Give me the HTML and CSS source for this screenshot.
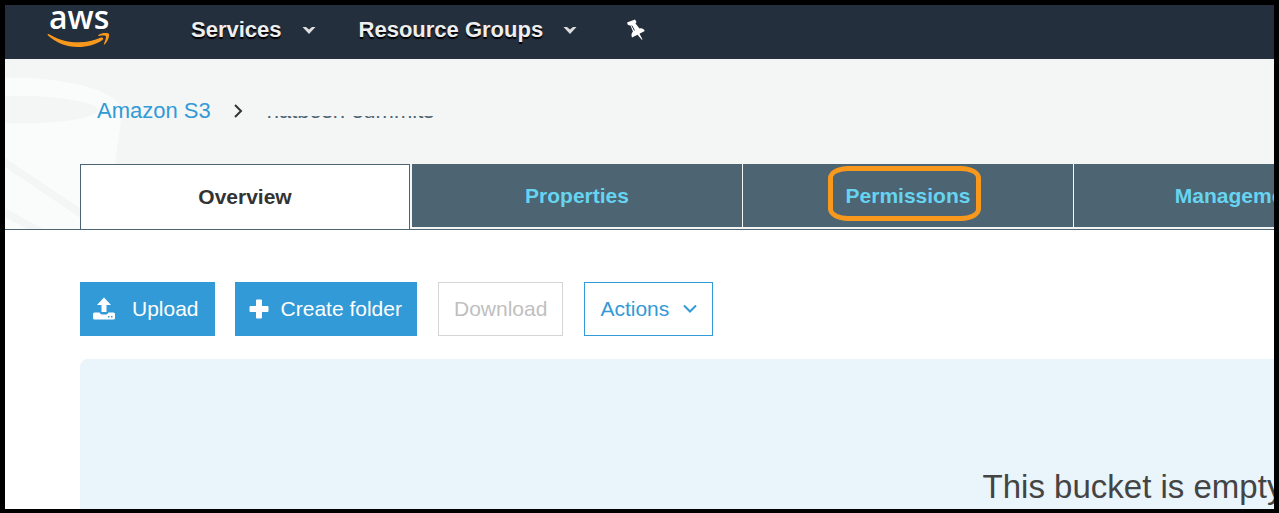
FILE: index.html
```html
<!DOCTYPE html>
<html lang="en">
<head>
<meta charset="utf-8">
<title>Amazon S3</title>
<link rel="stylesheet" href="styles.css">
</head>
<body>
<div class="frame">
  <nav class="topbar">
    <a class="logo" href="#" aria-label="aws">
      <svg viewBox="0 0 64 42" width="64" height="42">
        <text class="logo-text" x="2" y="24">aws</text>
        <path fill="#f8991d" d="M0.5 29.5C1 28.7 2 29 3 29.7C14 36 23 37.500 32 37.300C40 37.100 47 35.500 54 32.500C56 32 57 33.500 55.500 35C49 39.800 40 42 31 42C19 42 9 37.500 1 30.500ZM51.500 30C55 27.500 61 27.700 62 29C62.700 30.500 61 36.500 57.800 39.200C57 39.800 56.500 39.500 57 38.500C58.200 35.500 59.500 32 58.800 31.200C58 30.300 55 30.500 52 30.900C51 31 50.800 30.500 51.500 30Z"/>
      </svg>
    </a>
    <button class="menu services" type="button">Services
      <svg viewBox="0 0 14 9" width="14" height="9"><path fill="#ddd" d="M0.500 1L4 1L7 3.500L10 1L13.500 1L7 8Z"/></svg>
    </button>
    <button class="menu groups" type="button">Resource Groups
      <svg viewBox="0 0 14 9" width="14" height="9"><path fill="#ddd" d="M0.500 1L4 1L7 3.500L10 1L13.500 1L7 8Z"/></svg>
    </button>
    <button class="pin" type="button" aria-label="Pin">
      <svg viewBox="0 0 20 22" width="20" height="22"><path fill="#fff" d="M1 3.500L9 0.500L10.500 3L9.500 4.500L13.500 9.500C16 9 18 10 18.700 12L13.500 14.800L16.500 20.500L15.800 20.800L11.500 15.800L6 18.500C5 16 5.500 14.200 7 12.500L4.500 6.500L2 6Z"/><path d="M5.800 6.500L8.500 11.500" stroke="#242f3e" fill="none"/></svg>
    </button>
  </nav>
  <header class="page-head">
    <svg class="bucket" viewBox="0 0 120 170" width="120" height="170" aria-hidden="true">
      <path fill="#fafcfb" d="M0 19C50 17 118 30 117 54L110 105L100 170H0Z"/>
      <path fill="#f4f6f6" d="M0 37C42 35 93 42 93 51S42 66 0 64ZM0 99L100 166V170H92L0 108ZM0 149L38 170H22L0 158Z"/>
    </svg>
    <div class="crumbs">
      <a href="#">Amazon S3</a>
      <svg viewBox="0 0 10 14" width="10" height="14"><path d="M2 1L8 7L2 13" fill="none" stroke="#333" stroke-width="2"/></svg>
      <span class="bucket-name">hatbosh-summits</span>
    </div>
    <div class="tabs" role="tablist">
      <button class="tab active" type="button" role="tab" aria-selected="true">Overview</button>
      <button class="tab" type="button" role="tab">Properties</button>
      <button class="tab" type="button" role="tab"><span class="marked">Permissions</span></button>
      <button class="tab" type="button" role="tab">Management</button>
    </div>
  </header>
  <main class="content">
    <div class="actions">
      <button class="btn primary upload" type="button">
        <svg viewBox="0 0 24 24" width="24" height="24"><path fill="#fff" d="M12 0.500L19 8H14.500V15H9.500V8H5ZM2.500 15.500H7.500Q8.500 17.500 10 17.500H14Q15.500 17.500 16.500 15.500H21.500Q23 15.500 23 17V21Q23 22.500 21.500 22.500H2.500Q1 22.500 1 21V17Q1 15.500 2.500 15.500Z"/><path fill="#329ad6" d="M16 19h1.500v1.500H16zM19 19h1.500v1.500H19z"/></svg>
        Upload</button>
      <button class="btn primary create" type="button">
        <svg viewBox="0 0 20 20" width="20" height="20"><path fill="#fff" d="M8 0.500H12Q13 0.500 13 1.500V7H18.500Q19.500 7 19.500 8V12Q19.500 13 18.500 13H13V18.500Q13 19.500 12 19.500H8Q7 19.500 7 18.500V13H1.500Q0.500 13 0.500 12V8Q0.500 7 1.500 7H7V1.500Q7 0.500 8 0.500Z"/></svg>
        Create folder</button>
      <button class="btn" type="button" disabled>Download</button>
      <button class="btn outline" type="button">Actions
        <svg viewBox="0 0 14 10" width="14" height="10"><path d="M1 1.500L7 7.500L13 1.500" fill="none" stroke="#329ad6" stroke-width="2"/></svg>
      </button>
    </div>
    <section class="panel"><p>This bucket is empty</p></section>
  </main>
</div>
</body>
</html>
```

FILE: styles.css
```css
* { box-sizing: border-box; }
body { margin: 0; font-family: "Liberation Sans", Arial, sans-serif; }
button { font: inherit; border: 0; background: none; cursor: pointer; }
svg { display: block; flex: none; }
.frame {
  display: flex;
  flex-direction: column;
  height: 100vh;
  border: 5px solid #000;
  border-bottom-width: 4px;
  overflow: hidden;
  background: #fff;
}
.topbar {
  display: flex;
  flex: none;
  align-items: flex-start;
  height: 54px;
  padding-left: 42px;
  background: #242f3e;
}
.logo svg { overflow: visible; }
.logo-text { font: 600 32px "Open Sans", "Noto Sans", sans-serif; fill: #fff; }
.menu {
  display: flex;
  align-items: center;
  gap: 20px;
  padding: 0;
  font-size: 22px;
  font-weight: bold;
  line-height: 50px;
  color: #eee;
  text-shadow: 0 2px 1px #000;
}
.services { margin-left: 80px; }
.groups { margin-left: 43px; }
.pin { margin: 14px 0 0 49px; padding: 0; }
.page-head {
  position: relative;
  flex: none;
  padding-top: 36px;
  border-bottom: 1px solid #4d6472;
  background: #f4f6f6;
}
.bucket { position: absolute; left: 0; top: 0; }
.crumbs {
  position: relative;
  display: flex;
  align-items: center;
  height: 32px;
  padding-left: 92px;
  font-size: 22px;
}
.crumbs svg { margin: 0 24px 0 22px; }
.crumbs a { color: #329ad6; text-decoration: none; }
.bucket-name { line-height: 26px; color: #4d6472; clip-path: inset(18px 0 0 0); }
.tabs {
  position: relative;
  display: grid;
  grid-template-columns: 331px repeat(3, 330px);
  gap: 1px;
  align-items: start;
  margin-top: 37px;
  padding-left: 75px;
}
.tab {
  height: 63px;
  margin-bottom: 2px;
  padding: 0;
  font-size: 21px;
  font-weight: bold;
  color: #66d4f1;
  background: #4d6472;
}
.active {
  height: 65px;
  margin: 0 1px 0 0;
  border: 1px solid #4d6472;
  border-bottom: 0;
  color: #333;
  background: #fff;
}
.marked { position: relative; }
.marked::after {
  content: "";
  position: absolute;
  inset: -18px -11px -14px -18px;
  border: 5px solid #f8991d;
  border-radius: 20px / 12px;
}
.content { flex: 1; padding: 52px 0 0 75px; }
.actions { display: flex; gap: 21px; }
.btn {
  display: flex;
  align-items: center;
  gap: 14px;
  height: 54px;
  padding: 0 15px;
  border: 1px solid #d5d5d5;
  font-size: 21px;
  line-height: 26px;
  color: #bfbfbf;
}
.primary { border-color: #329ad6; color: #fff; background: #329ad6; }
.upload { gap: 16px; padding: 0 15px 0 11px; margin-right: -1px; }
.create { gap: 12px; padding: 0 14px 0 13px; }
.outline { border-color: #329ad6; color: #329ad6; }
.panel {
  width: 2106px;
  min-height: 360px;
  margin-top: 23px;
  padding-top: 108px;
  border-radius: 8px;
  text-align: center;
  background: #e9f4fb;
}
.panel p { margin: 0; font-size: 33px; line-height: 40px; color: #444; }
```
